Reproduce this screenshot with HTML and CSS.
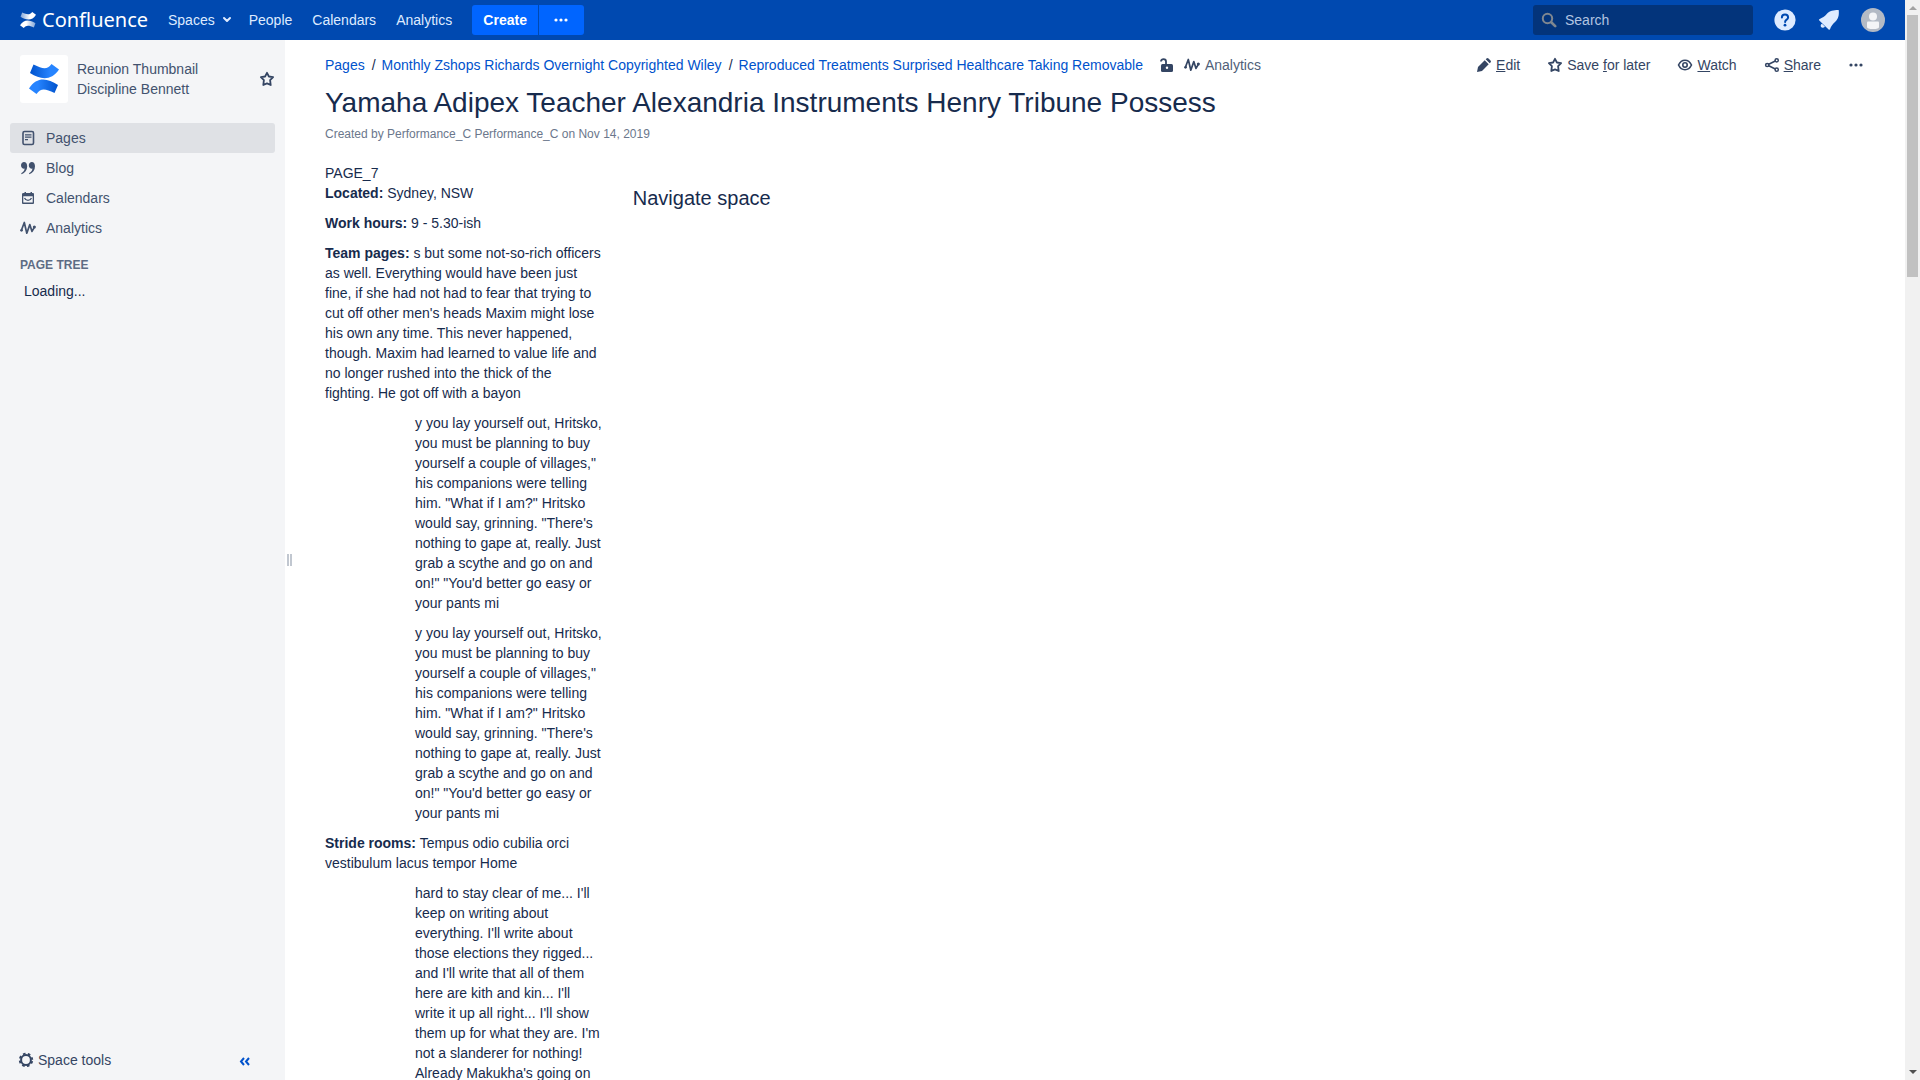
FILE: index.html
```html
<!DOCTYPE html>
<html lang="en">
<head>
<meta charset="utf-8">
<title>Yamaha Adipex Teacher Alexandria Instruments Henry Tribune Possess - Confluence</title>
<link rel="stylesheet" href="styles.css">
</head>
<body>
<svg class="defs" aria-hidden="true">
  <defs>
    <linearGradient id="blue-top" x1="0" y1="0" x2="1" y2="0"><stop offset="0" stop-color="#0052cc"/><stop offset=".7" stop-color="#2684ff"/></linearGradient>
    <linearGradient id="blue-bottom" x1="1" y1="0" x2="0" y2="0"><stop offset="0" stop-color="#0052cc"/><stop offset=".7" stop-color="#2684ff"/></linearGradient>
    <linearGradient id="white-top" x1="0" y1="0" x2="1" y2="0"><stop offset="0" stop-color="#fff" stop-opacity=".5"/><stop offset=".6" stop-color="#fff"/></linearGradient>
    <linearGradient id="white-bottom" x1="1" y1="0" x2="0" y2="0"><stop offset="0" stop-color="#fff" stop-opacity=".5"/><stop offset=".6" stop-color="#fff"/></linearGradient>
    <symbol id="star" viewBox="0 0 16 16"><path d="M8 1.800l1.900 3.700 4.200.7-3 2.900.6 4.900L8 12.400 4.300 14l.6-4.900-3-2.900 4.200-.7z" fill="none" stroke="currentColor" stroke-width="1.800" stroke-linejoin="round"/></symbol>
    <symbol id="pulse" viewBox="0 0 16 16"><path d="M1.300 10.500L4.300 2.500 6.800 13.200 9.800 4.600 12 11.400 14.600 6.800" fill="none" stroke="currentColor" stroke-width="1.700" stroke-linecap="round" stroke-linejoin="round"/><circle cx="14.300" cy="7" r="1.500" fill="currentColor"/><circle cx="1.600" cy="10.300" r="1.300" fill="currentColor"/></symbol>
    <symbol id="dots" viewBox="0 0 16 16"><circle cx="3" cy="8" r="1.600" fill="currentColor"/><circle cx="8" cy="8" r="1.600" fill="currentColor"/><circle cx="13" cy="8" r="1.600" fill="currentColor"/></symbol>
  </defs>
</svg>
<div class="window">
  <div class="app">
    <header class="topbar">
      <a class="brand" href="#">
        <svg class="icon" viewBox="0 0 30 30"><path fill="url(#white-top)" d="M4 1L1 9C12 16 23 17 30 5L23 0C18 6 13 5 4 1Z"/><path fill="url(#white-bottom)" d="M26 29L29 21C18 14 7 13 0 25L7 30C12 24 17 25 26 29Z"/></svg>
        <span class="wordmark">Confluence</span>
      </a>
      <nav class="topnav">
        <a href="#">Spaces <svg class="chevron" viewBox="0 0 10 8"><path d="M2 2l3 3 3-3" fill="none" stroke="currentColor" stroke-width="2" stroke-linecap="round" stroke-linejoin="round"/></svg></a>
        <a href="#">People</a>
        <a href="#">Calendars</a>
        <a href="#">Analytics</a>
      </nav>
      <div class="create">
        <button class="create-main" type="button">Create</button>
        <button class="create-more" type="button" aria-label="Create from template"><svg class="icon"><use href="#dots"/></svg></button>
      </div>
      <div class="tools">
        <label class="search">
          <svg class="icon" viewBox="0 0 16 16"><circle cx="6.500" cy="6.500" r="4.700" fill="none" stroke="currentColor" stroke-width="2"/><path d="M10.500 10.500l3.700 3.700" stroke="currentColor" stroke-width="2.600" stroke-linecap="round"/></svg>
          <input type="text" placeholder="Search" aria-label="Search">
        </label>
        <button class="tool" type="button" aria-label="Help"><svg viewBox="0 0 24 24"><circle cx="12" cy="12" r="10.600" fill="#deebff"/><path d="M8.900 9.600c0-2 1.300-3 3.100-3s3.100 1 3.100 2.800c0 2.300-3 2.200-3 4.600" fill="none" stroke="#0049b0" stroke-width="2" stroke-linecap="round"/><circle cx="12" cy="17.200" r="1.400" fill="#0049b0"/></svg></button>
        <button class="tool" type="button" aria-label="Notifications"><svg viewBox="0 0 24 24"><path fill="#deebff" d="M21.800 3.200Q22.200 2 21 2.100C17 2.300 12.500 2.600 9.500 6.200 7.800 8.200 5.500 9.700 2.300 11.200Q1.500 11.800 2.300 12.500L11.600 21.400Q12.600 22.200 13.100 21.100C14 17.800 15.800 16.200 18 14 21.800 10.500 22 6.500 21.800 3.200ZM4 16.400C3 18 4.300 19.900 6 19.700 7 19.600 7.600 19 7.900 18.500L5 15.700Z"/></svg></button>
        <button class="tool" type="button" aria-label="Profile"><svg viewBox="0 0 24 24"><circle cx="12" cy="12" r="12" fill="#b3bac5"/><circle cx="12" cy="8.400" r="4" fill="#f4f5f7"/><path d="M6 14.500q0-1 1-1h10q1 0 1 1v4.500q0 2-6 2t-6-2z" fill="#f4f5f7"/></svg></button>
      </div>
    </header>
    <div class="body">
      <aside class="sidebar">
        <div class="space">
          <a class="space-logo" href="#"><svg viewBox="0 0 30 30"><path fill="url(#blue-top)" d="M4.500.5L1 9C12 16 22 17 30 5.500L22.500 0C18 6 14 5 4.500.5Z"/><path fill="url(#blue-bottom)" d="M25.500 29L29 21C18 14 8 12.500 0 24.500L7.500 30C12 24 16 24.500 25.500 29Z"/></svg></a>
          <a class="space-name" href="#">Reunion Thumbnail Discipline Bennett</a>
          <button class="plain" type="button" aria-label="Star space"><svg class="icon"><use href="#star"/></svg></button>
        </div>
        <nav class="sidenav">
          <a class="current" href="#"><svg class="icon" viewBox="0 0 16 16"><rect x="3" y="1.500" width="10.500" height="13" rx="1.500" fill="none" stroke="currentColor" stroke-width="1.600"/><path d="M5 4.800h6.500M5 7.200h6.500M5 9.600h3" stroke="currentColor" stroke-width="1.300"/></svg>Pages</a>
          <a href="#"><svg class="icon" viewBox="0 0 16 16"><path fill="currentColor" d="M4 2C5.800 2 7.200 3.600 7.200 6.200 7.200 10 5 12.800 1.600 14.200L1.200 13.300C3.300 12.200 4.500 10.700 4.600 8.600 2.800 9 1 7.500 1 5.200 1 3.300 2.400 2 4 2ZM11.800 2C13.600 2 15 3.600 15 6.200 15 10 12.800 12.800 9.400 14.200L9 13.300C11.100 12.200 12.300 10.700 12.400 8.600 10.600 9 8.800 7.500 8.800 5.200 8.800 3.300 10.200 2 11.800 2Z"/></svg>Blog</a>
          <a href="#"><svg class="icon" viewBox="0 0 16 16"><path fill="currentColor" d="M3.500 3h1V2h1.500v1h4.500V2H12v1h1q1 0 1 1v9q0 1-1 1H3q-1 0-1-1V4q0-1 1.500-1zM3.300 6.300v6.300h9.400V6.300z"/><path d="M4.500 8c1.500 3.200 5.500 3.200 7 0" fill="none" stroke="currentColor" stroke-width="1.300"/></svg>Calendars</a>
          <a href="#"><svg class="icon"><use href="#pulse"/></svg>Analytics</a>
        </nav>
        <h5 class="tree-title">PAGE TREE</h5>
        <div class="tree">Loading...</div>
        <div class="sidebar-foot">
          <button class="plain" type="button"><svg class="icon" viewBox="0 0 16 16"><circle cx="8" cy="8" r="4.900" fill="none" stroke="currentColor" stroke-width="2"/><circle cx="8" cy="8" r="6.300" fill="none" stroke="currentColor" stroke-width="1.800" stroke-dasharray="2.600 2.348" stroke-dashoffset="-1.100"/></svg>Space tools</button>
          <button class="plain collapse" type="button" aria-label="Collapse sidebar"><svg class="icon" viewBox="0 0 16 16"><path d="M7 6L4 9.500l3 3.500M12 6L9 9.500l3 3.500" fill="none" stroke="currentColor" stroke-width="2"/></svg></button>
        </div>
      </aside>
      <div class="splitter"><span></span><span></span></div>
      <main class="content">
        <div class="page-head">
          <nav class="crumbs">
            <a href="#">Pages</a><span>/</span><a href="#">Monthly Zshops Richards Overnight Copyrighted Wiley</a><span>/</span><a href="#">Reproduced Treatments Surprised Healthcare Taking Removable</a>
          </nav>
          <div class="meta-tools">
            <button class="plain" type="button" aria-label="Unrestricted"><svg class="icon" viewBox="0 0 16 16"><rect x="3" y="7" width="12" height="8" rx="1.500" fill="currentColor"/><path d="M3 4.500C3 1.300 8 1.300 8 4.500V7.500" fill="none" stroke="currentColor" stroke-width="1.800"/><circle cx="9" cy="10.800" r="1.200" fill="#fff"/></svg></button>
            <a class="analytics" href="#"><svg class="icon"><use href="#pulse"/></svg>Analytics</a>
          </div>
          <div class="actions">
            <a href="#"><svg class="icon" viewBox="0 0 16 16"><path fill="currentColor" d="M1 15l1-5L8.700 3.300l4 4L6 14zM9.700 2.300l.8-.8q1-1 2 0l2 2q1 1 0 2l-.8.800z"/></svg><span><u>E</u>dit</span></a>
            <a href="#"><svg class="icon"><use href="#star"/></svg><span>Save <u>f</u>or later</span></a>
            <a href="#"><svg class="icon" viewBox="0 0 16 16"><path d="M1.500 8C4.500 1.700 11.500 1.700 14.500 8 11.500 14.300 4.500 14.300 1.500 8Z" fill="none" stroke="currentColor" stroke-width="1.600"/><circle cx="8" cy="8" r="2.200" fill="none" stroke="currentColor" stroke-width="1.600"/></svg><span><u>W</u>atch</span></a>
            <a href="#"><svg class="icon" viewBox="0 0 16 16"><path d="M12.800 3.300L3.200 8l9.600 4.700" fill="none" stroke="currentColor" stroke-width="1.600"/><g fill="#fff" stroke="currentColor" stroke-width="1.500"><circle cx="3.200" cy="8" r="1.600"/><circle cx="12.700" cy="3.300" r="1.600"/><circle cx="12.700" cy="12.700" r="1.600"/></g></svg><span><u>S</u>hare</span></a>
            <button class="plain" type="button" aria-label="More actions"><svg class="icon"><use href="#dots"/></svg></button>
          </div>
        </div>
        <h1>Yamaha Adipex Teacher Alexandria Instruments Henry Tribune Possess</h1>
        <p class="byline">Created by Performance_C Performance_C on Nov 14, 2019</p>
        <div class="columns">
          <div class="column-text">
            <div>PAGE_7</div>
            <p><strong>Located:</strong> Sydney, NSW</p>
            <p><strong>Work hours:</strong> 9 - 5.30-ish</p>
            <p><strong>Team pages:</strong> s but some not-so-rich officers as well. Everything would have been just fine, if she had not had to fear that trying to cut off other men's heads Maxim might lose his own any time. This never happened, though. Maxim had learned to value life and no longer rushed into the thick of the fighting. He got off with a bayon</p>
            <p class="indent">y you lay yourself out, Hritsko, you must be planning to buy yourself a couple of villages," his companions were telling him. "What if I am?" Hritsko would say, grinning. "There's nothing to gape at, really. Just grab a scythe and go on and on!" "You'd better go easy or your pants mi</p>
            <p class="indent">y you lay yourself out, Hritsko, you must be planning to buy yourself a couple of villages," his companions were telling him. "What if I am?" Hritsko would say, grinning. "There's nothing to gape at, really. Just grab a scythe and go on and on!" "You'd better go easy or your pants mi</p>
            <p><strong>Stride rooms:</strong> Tempus odio cubilia orci vestibulum lacus tempor Home</p>
            <p class="indent">hard to stay clear of me... I'll keep on writing about everything. I'll write about those elections they rigged... and I'll write that all of them here are kith and kin... I'll write it up all right... I'll show them up for what they are. I'm not a slanderer for nothing! Already Makukha's going on</p>
          </div>
          <div class="column-nav"><h2>Navigate space</h2></div>
        </div>
      </main>
    </div>
  </div>
  <div class="scrollbar" aria-hidden="true">
    <span class="arrow-up"></span>
    <span class="thumb"></span>
    <span class="arrow-down"></span>
  </div>
</div>
</body>
</html>
```

FILE: styles.css
```css
* { box-sizing: border-box; }

body {
  margin: 0;
  font: 14px/20px "Liberation Sans", Arial, sans-serif;
  color: #172b4d;
  background: #fff;
}

a { color: #0052cc; text-decoration: none; }
p { margin: 0; }
button, input { font: inherit; }
svg { display: block; }

.defs { position: absolute; width: 0; height: 0; }
.icon { width: 16px; height: 16px; flex: none; }

.plain {
  display: flex;
  align-items: center;
  padding: 0;
  border: 0;
  background: none;
  color: #344563;
}

.window { display: flex; height: 100vh; overflow: hidden; }
.app { flex: 1; min-width: 0; display: flex; flex-direction: column; }

/* Top bar */
.topbar {
  flex: none;
  display: flex;
  align-items: center;
  height: 40px;
  padding: 0 20px;
  background: #0049b0;
}
.brand { display: flex; align-items: center; gap: 6px; width: 148px; color: #fff; }
.wordmark { font-family: "Noto Sans", "Open Sans", sans-serif; font-size: 20px; }
.topnav { display: flex; gap: 20px; margin-right: 20px; }
.topnav a { display: flex; align-items: center; gap: 7px; color: #deebff; }
.topnav a:first-child { margin-right: -3px; }
.chevron { width: 10px; height: 8px; }

.create { display: flex; gap: 1px; }
.create button {
  display: flex;
  align-items: center;
  justify-content: center;
  height: 30px;
  padding: 0;
  border: 0;
  background: #0065ff;
  color: #fff;
  font-weight: bold;
}
.create .create-main { width: 66px; border-radius: 3px 0 0 3px; }
.create .create-more { width: 45px; padding-right: 2px; border-radius: 0 3px 3px 0; }

.tools { display: flex; align-items: center; gap: 20px; margin-left: auto; }
.search {
  display: flex;
  align-items: center;
  gap: 8px;
  width: 220px;
  height: 30px;
  padding: 0 8px;
  border-radius: 3px;
  background: #03347b;
  color: #7f8790;
}
.search input {
  flex: 1;
  min-width: 0;
  padding: 0;
  border: 0;
  background: none;
  color: #deebff;
  outline: none;
}
.search input::placeholder { color: #b2c4e1; opacity: 1; }
.tool { width: 24px; height: 24px; padding: 0; border: 0; background: none; }

/* Sidebar */
.body { flex: 1; min-height: 0; display: flex; }
.sidebar {
  flex: none;
  display: flex;
  flex-direction: column;
  width: 285px;
  padding: 15px 10px 10px;
  background: #f4f5f7;
}
.space { display: flex; align-items: center; gap: 9px; padding: 0 0 0 10px; margin-bottom: 20px; }
.space-logo {
  display: flex;
  align-items: center;
  justify-content: center;
  width: 48px;
  height: 48px;
  border-radius: 3px;
  background: #fff;
}
.space-logo svg { width: 30px; height: 30px; }
.space-name { flex: 1; padding-right: 40px; color: #42526e; }

.sidenav a {
  display: flex;
  align-items: center;
  gap: 10px;
  height: 30px;
  padding: 0 10px;
  border-radius: 3px;
  color: #42526e;
}
.sidenav .current { background: #dfe1e5; }
.tree-title { margin: 12px 10px 6px; font-size: 12px; line-height: 20px; color: #5e6c84; }
.tree { padding-left: 14px; }
.sidebar-foot {
  display: flex;
  align-items: center;
  justify-content: space-between;
  margin-top: auto;
  padding: 0 22px 0 8px;
}
.sidebar-foot .plain { gap: 4px; }
.sidebar-foot .collapse { color: #0052cc; }

.splitter {
  flex: none;
  display: flex;
  align-items: center;
  gap: 1px;
  width: 10px;
  padding-left: 2px;
}
.splitter span { width: 2px; height: 12px; background: #c1c7d0; }

/* Page */
.content { flex: 1; min-width: 0; padding: 15px 41px 0 30px; overflow: hidden; }
.page-head { display: flex; align-items: center; }
.crumbs { display: flex; gap: 6px; }
.crumbs span { padding-left: 1px; }
.meta-tools { display: flex; gap: 10px; margin-left: 15px; }
.analytics { display: flex; align-items: center; gap: 5px; color: #505f79; }
.analytics .icon { color: #344563; }
.actions { display: flex; gap: 27px; margin-left: auto; }
.actions a { display: flex; align-items: center; gap: 4px; color: #344563; }

h1 { margin: 12px 0 0; font-size: 28px; line-height: 32px; font-weight: normal; }
.byline { margin-top: 5px; font-size: 12px; color: #6b778c; }

.columns { display: flex; margin-top: 19px; }
.column-text { flex: none; width: 20%; padding-right: 30px; }
.column-text p + p { margin-top: 10px; }
.column-text .indent { margin-left: 90px; }
.column-nav h2 { margin: 23px 0 0; font-size: 20px; line-height: 24px; font-weight: normal; }

/* Window scrollbar */
.scrollbar {
  flex: none;
  display: flex;
  flex-direction: column;
  align-items: center;
  width: 15px;
  padding: 6px 0;
  background: #f1f1f1;
}
.thumb { width: 11px; height: 262px; margin-top: 5px; background: #c1c1c1; }
.arrow-up { border: 4px solid transparent; border-top: 0; border-bottom-color: #a3a3a3; }
.arrow-down { margin-top: auto; border: 4px solid transparent; border-bottom: 0; border-top-color: #505050; }
```
